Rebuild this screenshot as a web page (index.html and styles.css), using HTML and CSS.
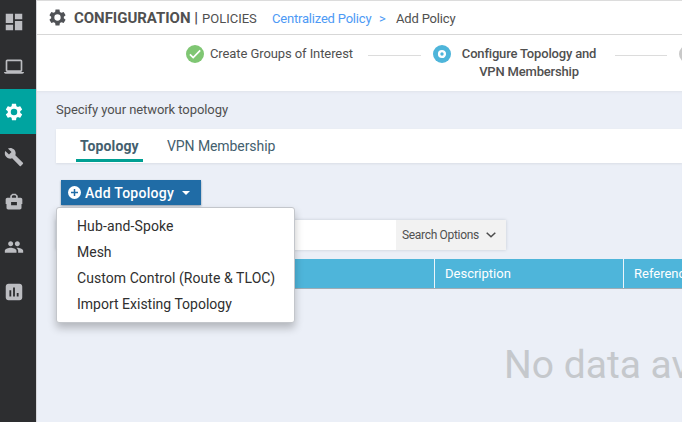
FILE: index.html
```html
<!DOCTYPE html>
<html lang="en">
<head>
<meta charset="utf-8">
<title>Configuration | Policies</title>
<link rel="stylesheet" href="styles.css">
</head>
<body>
<div class="app">
  <nav class="sidebar">
    <a class="nav-item"><svg width="22" height="22" viewBox="0 0 24 24"><path d="M3 13h8V3H3v10zm0 8h8v-6H3v6zm10 0h8V11h-8v10zm0-18v6h8V3h-8z"/></svg></a>
    <a class="nav-item"><svg width="20" height="20" viewBox="0 0 24 24"><path d="M20 18c1.100 0 1.990-.9 1.990-2L22 5c0-1.100-.9-2-2-2H4c-1.100 0-2 .9-2 2v11c0 1.100.9 2 2 2H0c0 1.100.9 2 2 2h20c1.100 0 2-.9 2-2h-4zM4 5h16v11H4V5z"/></svg></a>
    <a class="nav-item active"><svg width="20" height="20" viewBox="0 0 24 24"><path d="M19.430 12.980c.04-.32.070-.64.070-.98s-.03-.66-.07-.98l2.110-1.650c.19-.15.240-.42.120-.64l-2-3.460c-.12-.22-.39-.3-.61-.22l-2.490 1c-.52-.4-1.080-.73-1.690-.98l-.38-2.650C14.460 2.180 14.250 2 14 2h-4c-.25 0-.46.180-.49.420l-.38 2.650c-.61.250-1.170.590-1.690.980l-2.490-1c-.23-.09-.49 0-.61.220l-2 3.460c-.13.220-.07.490.12.640l2.110 1.650c-.04.320-.07.650-.07.980s.03.660.070.980l-2.110 1.650c-.19.150-.24.420-.12.640l2 3.460c.12.220.39.300.61.220l2.490-1c.52.400 1.080.730 1.690.980l.38 2.650c.03.240.24.420.49.420h4c.25 0 .46-.18.490-.42l.38-2.650c.61-.25 1.170-.59 1.690-.98l2.490 1c.23.090.49 0 .61-.22l2-3.460c.12-.22.070-.49-.12-.64l-2.110-1.650zM12 15.900a3.900 3.900 0 1 1 0-7.800 3.900 3.900 0 0 1 0 7.800z"/></svg></a>
    <a class="nav-item"><svg width="20" height="20" viewBox="0 0 24 24"><path d="M22.700 19l-9.100-9.100c.9-2.300.4-5-1.500-6.900-2-2-5-2.400-7.400-1.300L9 6 6 9 1.600 4.700C.4 7.100.9 10.100 2.900 12.100c1.900 1.900 4.600 2.400 6.900 1.500l9.100 9.100c.4.400 1 .4 1.400 0l2.300-2.300c.5-.4.500-1.100.1-1.400z"/></svg></a>
    <a class="nav-item"><svg width="20" height="20" viewBox="0 0 24 24"><path fill-rule="evenodd" d="M7.500 7V4.500l2.500-2.500h4l2.500 2.500V7H20c1.100 0 2 .9 2 2v5.500h-1V19c0 1.100-.9 2-2 2H5c-1.100 0-2-.9-2-2v-4.500H2V9c0-1.100.9-2 2-2zM9.500 7h5V5l-1-1h-3l-1 1zM8.500 12v4h7v-4z"/></svg></a>
    <a class="nav-item"><svg width="20" height="20" viewBox="0 0 24 24"><path d="M16 11c1.660 0 2.990-1.340 2.990-3S17.660 5 16 5s-3 1.340-3 3 1.340 3 3 3zm-8 0c1.660 0 2.990-1.340 2.990-3S9.660 5 8 5 5 6.340 5 8s1.340 3 3 3zm0 2c-2.330 0-7 1.170-7 3.500V19h14v-2.500C15 14.170 10.330 13 8 13zm8 0c-.29 0-.62.020-.97.050 1.160.84 1.970 1.970 1.970 3.450V19h6v-2.500c0-2.330-4.670-3.500-7-3.500z"/></svg></a>
    <a class="nav-item"><svg width="22" height="22" viewBox="0 0 24 24"><path d="M18 3H6c-1.700 0-3 1.300-3 3v12c0 1.700 1.300 3 3 3h12c1.700 0 3-1.300 3-3V6c0-1.700-1.300-3-3-3zM9 17H7v-7h2v7zm4 0h-2V7h2v10zm4 0h-2v-4h2v4z"/></svg></a>
  </nav>
  <main class="main">
    <header class="header">
      <svg class="gear" width="21" height="21" viewBox="0 0 24 24"><path fill-rule="evenodd" d="M9.500 2h5l.5 3 2 1.100 2.800-1 2.400 4.100L20 11v2l2.200 1.800-2.400 4.100-2.800-1-2 1.100-.5 3h-5L9 19l-2-1.100-2.800 1-2.400-4.100L4 13v-2L1.800 9.200l2.400-4.100 2.800 1L9 5zM12 8a4 4 0 1 0 0 8 4 4 0 0 0 0-8z"/></svg>
      <h1 class="title">CONFIGURATION |</h1>
      <span class="subtitle">POLICIES</span>
      <a class="crumb">Centralized Policy</a>
      <span class="crumb-sep">&gt;</span>
      <span class="crumb-current">Add Policy</span>
    </header>
    <section class="steps">
      <svg class="badge" width="18" height="18" viewBox="0 0 18 18"><circle cx="9" cy="9" r="9" fill="#7fc673"/><path d="M3.900 9.300l3.300 3.300 7-7.200" fill="none" stroke="#fff" stroke-width="1.700"/></svg>
      <span class="step-label">Create Groups of Interest</span>
      <i class="rule"></i>
      <svg class="badge" width="18" height="18" viewBox="0 0 18 18"><circle cx="9" cy="9" r="9" fill="#4eb5da"/><circle cx="9" cy="9" r="2.900" fill="none" stroke="#fff" stroke-width="2.400"/></svg>
      <span class="step-label current">Configure Topology and<br>VPN Membership</span>
      <i class="rule second"></i>
      <svg class="badge" width="18" height="18" viewBox="0 0 18 18"><circle cx="9" cy="9" r="9" fill="#c9c9c9"/></svg>
    </section>
    <section class="content">
      <p class="hint">Specify your network topology</p>
      <div class="tabs">
        <a class="tab selected">Topology</a>
        <a class="tab">VPN Membership</a>
      </div>
      <div class="actions">
        <button class="add-button">
          <svg width="13" height="13" viewBox="0 0 13 13"><circle cx="6.500" cy="6.500" r="6.500" fill="#fff"/><path d="M6.500 3v7M3 6.500h7" stroke="#206ca6" stroke-width="1.500"/></svg>
          <span>Add Topology</span>
          <i class="caret"></i>
        </button>
        <ul class="menu">
          <li class="hub">Hub-and-Spoke</li>
          <li>Mesh</li>
          <li class="custom">Custom Control (Route &amp; TLOC)</li>
          <li>Import Existing Topology</li>
        </ul>
      </div>
      <div class="search">
        <div class="search-input"></div>
        <div class="search-options"><span>Search Options</span><svg width="10" height="6" viewBox="0 0 10 6"><path d="M.7.700L5 4.800 9.300.700" fill="none" stroke="#4c4c4c" stroke-width="1.500"/></svg></div>
      </div>
      <div class="table-head">
        <div class="th"></div>
        <div class="th">Description</div>
        <div class="th">Reference Count</div>
      </div>
      <div class="empty">No data available</div>
    </section>
  </main>
</div>
</body>
</html>
```
FILE: styles.css
```css
* { box-sizing: border-box; }
body { margin: 0; font-family: Roboto, "Liberation Sans", sans-serif; color: #505050; }
.app { display: flex; width: 100vw; height: 100vh; overflow: hidden; }
.sidebar { flex: 0 0 36px; background: #2d2e30; padding-right: 8px; }
.nav-item { display: flex; align-items: center; justify-content: center; height: 45px; }
.nav-item:first-child { height: 44px; }
.nav-item svg { flex: none; fill: #bcbdc1; }
.nav-item.active { background: #00a4a0; margin-right: -8px; padding-right: 8px; }
.nav-item.active svg { fill: #fff; }
.main { flex: 1; min-width: 0; display: flex; flex-direction: column; overflow: hidden; border-left: 1px solid #d5d6da; }
.header { flex: none; display: flex; align-items: center; height: 35px; padding: 1px 0 0 11px; background: #fff; border-top: 1px solid #dcdcdc; border-bottom: 1px solid #d7d7d7; white-space: nowrap; }
.gear { flex: none; width: 19px; margin: -2px 7px 0 0; fill: #505256; }
.title { margin: 0; width: 128px; font-size: 15px; font-weight: 700; letter-spacing: -0.03px; }
.subtitle { width: 70px; font-size: 13px; padding-top: 1px; }
.crumb { width: 107px; color: #4d9af5; font-size: 13px; letter-spacing: -0.2px; padding-top: 1px; }
.crumb-sep { width: 17px; color: #4d9af5; font-size: 13px; padding-top: 1px; }
.crumb-current { font-size: 13px; letter-spacing: -0.18px; padding-top: 1px; }
.steps { flex: none; display: flex; align-items: flex-start; height: 56px; padding: 10px 0 0 149px; background: #fff; white-space: nowrap; }
.badge { flex: none; }
.step-label { flex: none; width: 158px; margin-left: 6px; font-size: 13px; letter-spacing: -0.09px; line-height: 18px; }
.step-label.current { width: 136px; margin-left: 10px; text-align: center; font-weight: 500; letter-spacing: -0.18px; }
.rule { flex: none; width: 53px; height: 1px; margin: 10px 12px 0 0; background: #dcdcdc; }
.rule.second { width: 52px; margin-left: 18px; }
.content { flex: 1; padding: 11px 0 0 19px; background: #ebeff7; box-shadow: inset 0 3px 3px -2px #dfe3ea; }
.hint { margin: 0; font-size: 13px; letter-spacing: -0.07px; line-height: 16px; }
.tabs { display: flex; height: 34px; margin-top: 11px; padding-left: 20px; background: #fff; box-shadow: 0 1px 2px #d9dde5; gap: 24px; }
.tab { padding: 8px 4px 0; height: 33px; color: #43606e; font-size: 14px; letter-spacing: -0.08px; line-height: 18px; margin-right: -4px; white-space: nowrap; }
.tab.selected { width: 67px; font-weight: 700; letter-spacing: 0.1px; border-bottom: 3px solid #009f93; }
.actions { position: relative; height: 25px; margin-top: 17px; padding-left: 5px; }
.add-button { display: flex; align-items: center; width: 140px; height: 25px; padding: 0 0 0 7px; border: 0; background: #206ca6; color: #fff; font: 500 14px/18px Roboto, sans-serif; letter-spacing: 0.27px; box-shadow: 0 1px 2px #8996a3; white-space: nowrap; }
.add-button span { width: 97px; margin-left: 4px; text-align: left; }
.caret { border: 4px solid transparent; border-top-color: #fff; border-bottom: 0; }
.menu { position: absolute; z-index: 2; left: 0; top: 27px; width: 239px; height: 116px; margin: 0; padding: 5px 0 0 20px; list-style: none; background: #fff; border: 1px solid #c3c6cb; border-radius: 3px; box-shadow: 0 5px 9px rgba(0,0,0,.24); color: #2f2f2f; font-size: 14px; line-height: 26px; white-space: nowrap; }
.hub { letter-spacing: 0.12px; }
.custom { letter-spacing: 0.06px; }
.search { display: flex; width: 450px; height: 30px; margin-top: 15px; background: #fff; box-shadow: 0 0 3px #c5cad2; }
.search-input { width: 340px; }
.search-options { flex: 1; display: flex; align-items: center; padding: 0 0 1px 6px; gap: 9px; background: #f2f2f2; font-size: 12px; letter-spacing: -0.3px; }
.search-options span { width: 75px; letter-spacing: -0.32px; white-space: nowrap; }
.table-head { display: flex; height: 30px; margin-top: 9px; background: #4eb5da; border-bottom: 1px solid #9eacb5; color: #fff; font-size: 13px; line-height: 29px; }
.th { flex: none; width: 189px; padding-left: 10px; border-right: 1px solid #edf5fa; white-space: nowrap; }
.th:first-child { width: 379px; }
.empty { margin: 53px 0 0 448px; color: #c5c8cc; font-size: 39px; line-height: 46px; white-space: nowrap; }
```
